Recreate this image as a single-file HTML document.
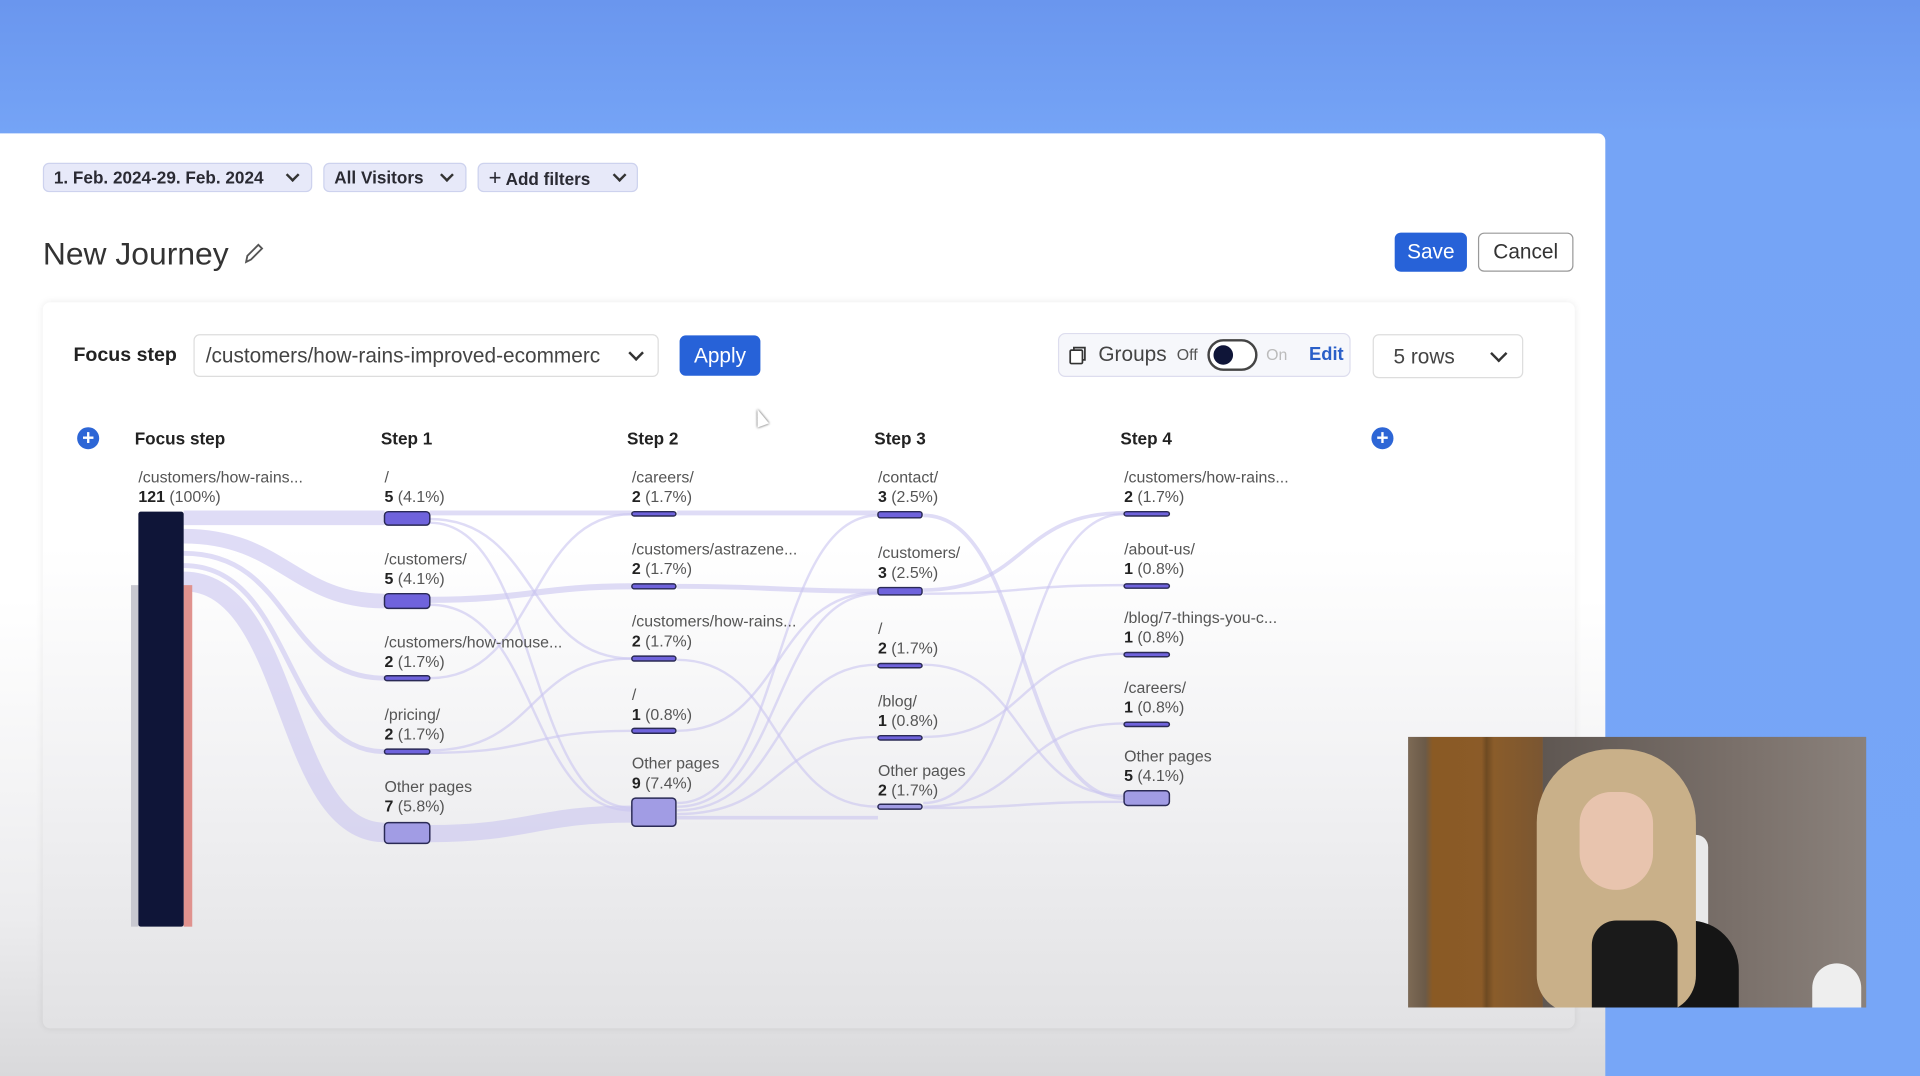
<!DOCTYPE html>
<html><head><meta charset="utf-8"><style>
*{margin:0;padding:0;box-sizing:border-box}
html,body{width:1920px;height:1076px;overflow:hidden;background:#74a3f5}
#w{position:absolute;left:0;top:0;width:1568px;height:879px;transform-origin:0 0;transform:scale(1.22449,1.22412);font-family:"Liberation Sans",sans-serif;color:#222;
background:linear-gradient(180deg,#6a96ee 0,#75a4f6 110px,#77a6f7 100%)}
.abs{position:absolute}
#card{left:0;top:109px;width:1311px;height:770px;background:linear-gradient(180deg,#fff 0,#fff 380px,#ececee 640px,#d9d9db 770px);border-top-right-radius:6px}
.pill{top:133px;height:24px;background:#e7e9f9;border:1px solid #cdd2ee;border-radius:5px;font-size:14px;font-weight:bold;color:#2a2a33;line-height:22px;padding-left:8px}
.chev{position:absolute;top:5px;width:8px;height:8px;border-right:2px solid #333;border-bottom:2px solid #333;transform:rotate(45deg)}
#inner{left:35px;top:247px;width:1251px;height:593px;background:linear-gradient(180deg,#fff 0,#fff 200px,#efeff1 420px,#e2e2e4 593px);border-radius:6px;box-shadow:0 0 6px rgba(0,0,0,.08)}
.hd{top:350px;font-size:14px;font-weight:bold;color:#222}
.lb{font-size:13px;color:#555;line-height:16px;white-space:nowrap}
.lb b{color:#222}
.plus{width:18px;height:18px;border-radius:50%;background:#2d66d6;color:#fff;font-size:17px;line-height:18px;text-align:center;font-weight:bold}
</style></head><body><div id="w">
<div id="card" class="abs"></div>
<div class="abs pill" style="left:35px;width:220px">1. Feb. 2024-29. Feb. 2024<span class="chev" style="left:199px"></span></div>
<div class="abs pill" style="left:264px;width:117px">All Visitors<span class="chev" style="left:96px"></span></div>
<div class="abs pill" style="left:390px;width:131px"><span style="font-weight:normal;font-size:18px">+</span> Add filters<span class="chev" style="left:111px"></span></div>
<div class="abs" style="left:35px;top:192px;font-size:26px;color:#333">New Journey</div>
<svg class="abs" style="left:197px;top:197px" width="20" height="20" viewBox="0 0 20 20"><path d="M4 17 L5 12 L14 3 L17 6 L8 15 Z" fill="none" stroke="#555" stroke-width="1.5"/></svg>
<div class="abs" style="left:1139px;top:190px;width:59px;height:32px;background:#2762d8;border-radius:5px;color:#fff;font-size:17px;text-align:center;line-height:32px">Save</div>
<div class="abs" style="left:1207px;top:190px;width:78px;height:32px;border:1px solid #999;border-radius:5px;color:#333;font-size:17px;text-align:center;line-height:30px;background:#fff">Cancel</div>
<div id="inner" class="abs"></div>
<div class="abs" style="left:60px;top:282px;font-size:16px;font-weight:bold">Focus step</div>
<div class="abs" style="left:158px;top:273px;width:380px;height:35px;border:1px solid #ddd;border-radius:5px;background:#fff;font-size:17px;color:#444;line-height:33px;padding-left:9px;overflow:hidden">/customers/how-rains-improved-ecommerc<span class="chev" style="left:356px;top:10px;width:9px;height:9px"></span></div>
<div class="abs" style="left:555px;top:274px;width:66px;height:33px;background:#2762d8;border-radius:5px;color:#fff;font-size:17px;text-align:center;line-height:33px">Apply</div>
<div class="abs" style="left:864px;top:272px;width:239px;height:36px;border:1px solid #dde;border-radius:6px;background:#f6f7fb"></div>
<svg class="abs" style="left:872px;top:281px" width="18" height="18" viewBox="0 0 18 18"><rect x="2" y="5" width="10" height="11" rx="1" fill="#fff" stroke="#333" stroke-width="1.4"/><path d="M5 5V3h9v10h-2" fill="none" stroke="#333" stroke-width="1.4"/></svg>
<div class="abs" style="left:897px;top:280px;font-size:17px;color:#444">Groups</div>
<div class="abs" style="left:961px;top:282px;font-size:13px;color:#555">Off</div>
<div class="abs" style="left:986px;top:277px;width:41px;height:26px;border:2px solid #444;border-radius:13px;background:#fff"><div style="position:absolute;left:3px;top:3px;width:16px;height:16px;border-radius:50%;background:#0f1538"></div></div>
<div class="abs" style="left:1034px;top:282px;font-size:13px;color:#bbb">On</div>
<div class="abs" style="left:1069px;top:281px;font-size:15px;font-weight:bold;color:#2a5fc8">Edit</div>
<div class="abs" style="left:1121px;top:273px;width:123px;height:36px;border:1px solid #ddd;border-radius:5px;background:#fff;font-size:17px;color:#444;line-height:36px;padding-left:16px">5 rows<span class="chev" style="left:97px;top:10px;width:10px;height:10px"></span></div>
<div class="abs" style="left:616px;top:334px;width:0;height:0;border-left:5px solid transparent;border-right:5px solid transparent;border-bottom:14px solid #fff;filter:drop-shadow(0 0 1px #333);transform:rotate(-20deg)"></div>

<div class="abs plus" style="left:63px;top:349px">+</div>
<div class="abs plus" style="left:1120px;top:349px">+</div>
<div class="abs hd" style="left:110px">Focus step</div>
<div class="abs hd" style="left:311px">Step 1</div>
<div class="abs hd" style="left:512px">Step 2</div>
<div class="abs hd" style="left:714px">Step 3</div>
<div class="abs hd" style="left:915px">Step 4</div>

<svg class="abs" style="left:0;top:0" width="1568" height="879">
<g fill="none" stroke="#c9c5f0" stroke-opacity=".6">
<path d="M150 423 H314" stroke-width="12"/>
<path d="M150 438 C230 438,240 491,314 491" stroke-width="12"/>
<path d="M150 452 C240 452,230 554,314 554" stroke-width="4"/>
<path d="M150 462 C240 462,230 614,314 614" stroke-width="4"/>
<path d="M150 475 C240 475,230 680,314 680" stroke-width="16"/>
<path d="M351 419 H516" stroke-width="4"/>
<path d="M351 424 C440 424,430 538,516 538" stroke-width="2"/>
<path d="M351 427 C440 427,430 660,516 660" stroke-width="2"/>
<path d="M351 490 C430 490,440 479,516 479" stroke-width="5"/>
<path d="M351 494 C440 494,430 662,516 662" stroke-width="2"/>
<path d="M351 554 C440 554,430 420,516 420" stroke-width="2"/>
<path d="M351 613 C440 613,430 538,516 538" stroke-width="2"/>
<path d="M351 615 C440 615,430 597,516 597" stroke-width="2"/>
<path d="M351 681 C430 681,440 665,516 665" stroke-width="14"/>
<path d="M553 419 H717" stroke-width="4"/>
<path d="M553 479 C630 479,640 483,717 483" stroke-width="4"/>
<path d="M553 539 C640 539,630 659,717 659" stroke-width="2"/>
<path d="M553 597 C640 597,630 484,717 484" stroke-width="2"/>
<path d="M553 656 C640 656,630 421,717 421" stroke-width="2"/>
<path d="M553 659 C640 659,630 485,717 485" stroke-width="2"/>
<path d="M553 662 C640 662,630 543,717 543" stroke-width="2"/>
<path d="M553 665 C640 665,630 602,717 602" stroke-width="2"/>
<path d="M553 668 H717" stroke-width="3"/>
<path d="M754 421 C840 421,830 652,918 652" stroke-width="3"/>
<path d="M754 482 C840 482,830 419,918 419" stroke-width="3"/>
<path d="M754 485 C840 485,830 478,918 478" stroke-width="2"/>
<path d="M754 543 C840 543,830 650,918 650" stroke-width="2"/>
<path d="M754 602 C840 602,830 534,918 534" stroke-width="2"/>
<path d="M754 659 C840 659,830 591,918 591" stroke-width="2"/>
<path d="M754 660 C840 660,830 655,918 655" stroke-width="2"/>
<path d="M754 656 C840 656,830 420,918 420" stroke-width="2"/>
</g>
<rect x="107" y="478" width="6" height="279" fill="#c8c8d0"/>
<rect x="150" y="478" width="7" height="279" fill="#e0928e"/>
<rect x="113" y="418" width="37" height="339" rx="2" fill="#0f1538"/>
<g stroke="#2a2a55" stroke-width="1.2">
<rect x="314" y="418" width="37" height="11" rx="3" fill="#6f63dc"/>
<rect x="314" y="485" width="37" height="12" rx="3" fill="#6f63dc"/>
<rect x="314" y="552" width="37" height="4" rx="2" fill="#6f63dc"/>
<rect x="314" y="612" width="37" height="4" rx="2" fill="#6f63dc"/>
<rect x="314" y="672" width="37" height="17" rx="3" fill="#a19ce4"/>
<rect x="516" y="418" width="36" height="3.5" rx="2" fill="#6f63dc"/>
<rect x="516" y="477" width="36" height="4" rx="2" fill="#6f63dc"/>
<rect x="516" y="536" width="36" height="4" rx="2" fill="#6f63dc"/>
<rect x="516" y="595" width="36" height="4" rx="2" fill="#6f63dc"/>
<rect x="516" y="652" width="36" height="23" rx="3" fill="#a19ce4"/>
<rect x="717" y="418" width="36" height="5" rx="2" fill="#6f63dc"/>
<rect x="717" y="480" width="36" height="6" rx="2" fill="#6f63dc"/>
<rect x="717" y="542" width="36" height="3.5" rx="2" fill="#6f63dc"/>
<rect x="717" y="601" width="36" height="3.5" rx="2" fill="#6f63dc"/>
<rect x="717" y="657" width="36" height="4" rx="2" fill="#a19ce4"/>
<rect x="918" y="418" width="37" height="3.5" rx="2" fill="#6f63dc"/>
<rect x="918" y="477" width="37" height="3.5" rx="2" fill="#6f63dc"/>
<rect x="918" y="533" width="37" height="3.5" rx="2" fill="#6f63dc"/>
<rect x="918" y="590" width="37" height="3.5" rx="2" fill="#6f63dc"/>
<rect x="918" y="646" width="37" height="12" rx="3" fill="#a19ce4"/>
</g>
</svg>

<div class="abs lb" style="left:113px;top:382px">/customers/how-rains...<br><b>121</b> (100%)</div>
<div class="abs lb" style="left:314px;top:382px">/<br><b>5</b> (4.1%)</div>
<div class="abs lb" style="left:314px;top:449px">/customers/<br><b>5</b> (4.1%)</div>
<div class="abs lb" style="left:314px;top:517px">/customers/how-mouse...<br><b>2</b> (1.7%)</div>
<div class="abs lb" style="left:314px;top:576px">/pricing/<br><b>2</b> (1.7%)</div>
<div class="abs lb" style="left:314px;top:635px">Other pages<br><b>7</b> (5.8%)</div>
<div class="abs lb" style="left:516px;top:382px">/careers/<br><b>2</b> (1.7%)</div>
<div class="abs lb" style="left:516px;top:441px">/customers/astrazene...<br><b>2</b> (1.7%)</div>
<div class="abs lb" style="left:516px;top:500px">/customers/how-rains...<br><b>2</b> (1.7%)</div>
<div class="abs lb" style="left:516px;top:560px">/<br><b>1</b> (0.8%)</div>
<div class="abs lb" style="left:516px;top:616px">Other pages<br><b>9</b> (7.4%)</div>
<div class="abs lb" style="left:717px;top:382px">/contact/<br><b>3</b> (2.5%)</div>
<div class="abs lb" style="left:717px;top:444px">/customers/<br><b>3</b> (2.5%)</div>
<div class="abs lb" style="left:717px;top:506px">/<br><b>2</b> (1.7%)</div>
<div class="abs lb" style="left:717px;top:565px">/blog/<br><b>1</b> (0.8%)</div>
<div class="abs lb" style="left:717px;top:622px">Other pages<br><b>2</b> (1.7%)</div>
<div class="abs lb" style="left:918px;top:382px">/customers/how-rains...<br><b>2</b> (1.7%)</div>
<div class="abs lb" style="left:918px;top:441px">/about-us/<br><b>1</b> (0.8%)</div>
<div class="abs lb" style="left:918px;top:497px">/blog/7-things-you-c...<br><b>1</b> (0.8%)</div>
<div class="abs lb" style="left:918px;top:554px">/careers/<br><b>1</b> (0.8%)</div>
<div class="abs lb" style="left:918px;top:610px">Other pages<br><b>5</b> (4.1%)</div>

<div class="abs" style="left:1150px;top:602px;width:374px;height:221px;overflow:hidden;background:#6e6764">
<div class="abs" style="left:0;top:0;width:110px;height:221px;background:linear-gradient(90deg,#7d6a55 0,#6b5a48 14px,#8a5a24 20px,#8b5b28 60px,#6e4a22 64px,#8a5c2a 70px,#7a5632 110px)"></div>
<div class="abs" style="left:110px;top:0;width:264px;height:221px;background:linear-gradient(90deg,#5f5752,#7a706a 60%,#8a817b)"></div>
<div class="abs" style="left:215px;top:80px;width:30px;height:130px;background:#e9e9ea;border-radius:10px"></div>
<div class="abs" style="left:120px;top:150px;width:150px;height:80px;background:#151515;border-radius:40px 40px 0 0"></div>
<div class="abs" style="left:105px;top:10px;width:130px;height:215px;background:#c9b089;border-radius:60px 60px 30px 30px"></div>
<div class="abs" style="left:150px;top:150px;width:70px;height:80px;background:#1a1a1a;border-radius:20px 20px 0 0"></div>
<div class="abs" style="left:140px;top:45px;width:60px;height:80px;background:#e8c4ae;border-radius:30px 30px 35px 35px"></div>
<div class="abs" style="left:330px;top:185px;width:40px;height:36px;background:#eee;border-radius:20px 20px 0 0"></div>
</div>
</div></body></html>
